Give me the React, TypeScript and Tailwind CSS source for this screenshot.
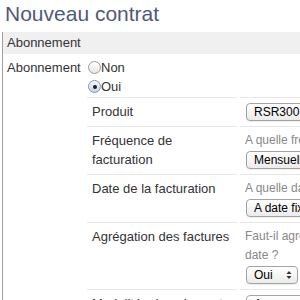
import React from "react";

function Arrows() {
  return (
    <svg width="6" height="10" viewBox="0 0 6 10" className="shrink-0">
      <path d="M3 1 L5.5 4 L0.5 4 Z" fill="#333" />
      <path d="M3 9 L5.5 6 L0.5 6 Z" fill="#333" />
    </svg>
  );
}

function Select({ children, narrow }: { children: React.ReactNode; narrow?: boolean }) {
  return (
    <div
      className={
        narrow
          ? "mt-[1px] mb-[1px] ml-[1px] h-[18px] w-[52px] rounded-[4px] border border-[#a3a3a3] bg-gradient-to-b from-white to-[#ebebeb] pl-[7px] pr-[5px] flex items-center justify-between text-[12px] leading-none text-black shadow-[0_1px_1px_rgba(0,0,0,0.08)]"
          : "mt-[1px] mb-[1px] ml-[1px] h-[18px] w-[200px] rounded-[4px] border border-[#a3a3a3] bg-gradient-to-b from-white to-[#ebebeb] pl-[7px] pr-[5px] flex items-center text-[12px] leading-none text-black shadow-[0_1px_1px_rgba(0,0,0,0.08)]"
      }
    >
      <span className="whitespace-nowrap">{children}</span>
      {narrow ? <Arrows /> : null}
    </div>
  );
}

function Row({ label, children }: { label: string; children: React.ReactNode }) {
  return (
    <div className="flex">
      <div className="w-[150px] shrink-0 border-t border-[#e6e6e6] pl-[5px] pr-[5px] pt-[4px] pb-[4px] leading-[19px] text-[#333]">
        {label}
      </div>
      <div className="ml-[3px] w-[230px] shrink-0 border-t border-[#e6e6e6] pl-[5px] pt-[4px] pb-[4px] leading-[19px]">
        {children}
      </div>
    </div>
  );
}

function Radio({ checked }: { checked?: boolean }) {
  return checked ? (
    <span className="ml-[1px] flex h-[13px] w-[13px] shrink-0 items-center justify-center rounded-full border border-[#7f93b3] bg-gradient-to-b from-[#f4f7fc] to-[#c9d6ea]">
      <span className="h-[4px] w-[4px] rounded-full bg-[#1c1c1c]" />
    </span>
  ) : (
    <span className="ml-[1px] h-[13px] w-[13px] shrink-0 rounded-full border border-[#9b9b9b] bg-gradient-to-b from-white to-[#e6e6e6]" />
  );
}

export default function App() {
  return (
    <div className="h-[300px] w-[300px] overflow-hidden bg-white font-['Liberation_Sans',Arial,sans-serif] text-[13px] text-[#333]">
      <h1 className="pl-[5px] pt-[1px] text-[21px] font-normal leading-[25px] text-[#4e5a78]">Nouveau contrat</h1>
      <div className="ml-[2px] mt-[6px] border-l border-[#a0a0a0]">
        <div className="h-[22px] bg-[#f0f0f0] pl-[4px] leading-[22px] text-[#333]">Abonnement</div>
        <div className="flex">
          <div className="w-[84px] shrink-0 pl-[4px] pt-[4px] leading-[19px]">Abonnement</div>
          <div className="flex-1 pt-[4px]">
            <div className="flex h-[19px] items-center leading-[19px]">
              <Radio />
              <span>Non</span>
            </div>
            <div className="flex h-[19px] items-center leading-[19px]">
              <Radio checked />
              <span>Oui</span>
            </div>
            <div className="mt-[1px]">
              <Row label="Produit">
                <Select>RSR300 - Routeur</Select>
              </Row>
              <Row label="Fréquence de facturation">
                <div className="whitespace-nowrap text-[12px] text-[#888]">A quelle fréquence facturer ?</div>
                <Select>Mensuelle</Select>
              </Row>
              <Row label="Date de la facturation">
                <div className="whitespace-nowrap text-[12px] text-[#888]">A quelle date facturer ?</div>
                <Select>A date fixe</Select>
              </Row>
              <Row label="Agrégation des factures">
                <div className="text-[12px] text-[#888]">Faut-il agréger les factures à une même date ?</div>
                <Select narrow>Oui</Select>
              </Row>
              <Row label="Modalités de paiement">
                <Select>Aucune</Select>
              </Row>
            </div>
          </div>
        </div>
      </div>
    </div>
  );
}
